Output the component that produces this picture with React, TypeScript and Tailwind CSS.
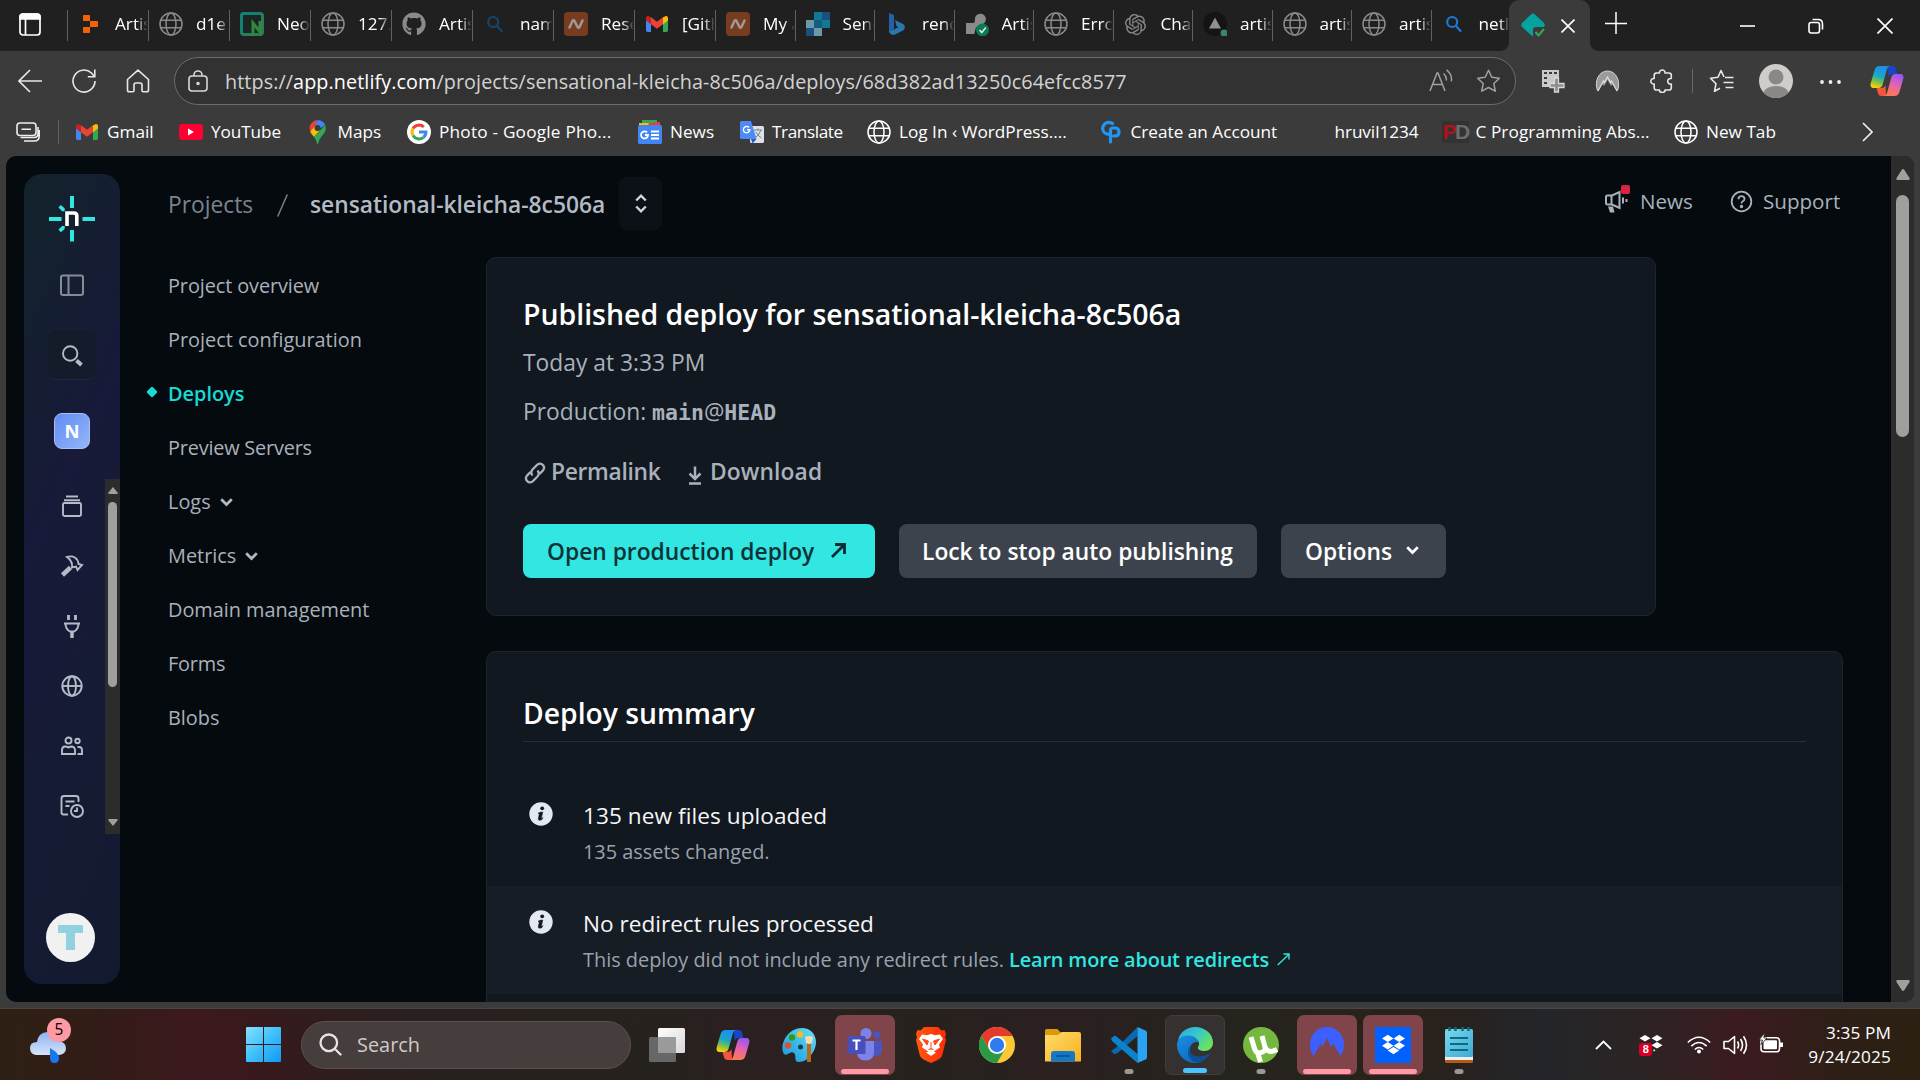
import React from 'react';
import { FaGithub, FaDropbox } from 'react-icons/fa';
import { SiOpenai } from 'react-icons/si';

/* ---------- shared icons ---------- */

const Globe = ({ color = '#8a8a8a', size = 24, stroke = 1.5 }: { color?: string; size?: number; stroke?: number }) => (
  <svg width={size} height={size} viewBox="0 0 24 24" fill="none" stroke={color} strokeWidth={stroke}>
    <circle cx="12" cy="12" r="11" />
    <ellipse cx="12" cy="12" rx="5" ry="11" />
    <path d="M2 8.300h20M2 15.700h20" />
  </svg>
);

const GmailIcon = () => (
  <svg width="24" height="24" viewBox="0 0 24 24">
    <path d="M1 6v12.300c0 1 .7 1.700 1.700 1.700H6V10z" fill="#4285f4" />
    <path d="M23 6v12.300c0 1-.7 1.700-1.700 1.700H18V10z" fill="#34a853" />
    <path d="M18 5.200 20 4.400c1.500-.8 3 .2 3 1.800V8.500l-5 3.700z" fill="#fbbc04" />
    <path d="M6 5.200 4 4.400C2.500 3.600 1 4.600 1 6.200v2.300l5 3.700z" fill="#c5221f" />
    <path d="M6 5.200 12 9.700l6-4.500v7l-6 4.500-6-4.500z" fill="#ea4335" />
  </svg>
);

const SearchTab = ({ color }: { color: string }) => (
  <svg width="24" height="24" viewBox="0 0 24 24" fill="none" stroke={color} strokeWidth="2.200" strokeLinecap="round">
    <circle cx="10.200" cy="10" r="5" />
    <path d="m14 14 4.500 5" />
  </svg>
);

const NamecheapIcon = () => (
  <svg width="24" height="24" viewBox="0 0 24 24">
    <rect width="24" height="24" rx="4" fill="#783c21" />
    <path d="M5.500 15.500 8.500 9c.5-1 1.500-1 2 0l3 6c.5 1 1.500 1 2 0l3-6.500" fill="none" stroke="#a09a96" strokeWidth="2.500" strokeLinecap="round" />
  </svg>
);

const Copilot = ({ id }: { id: string }) => (
  <svg width="34" height="30" viewBox="0 0 34 30">
    <defs>
      <linearGradient id={`${id}a`} x1="0.600" y1="0" x2="0.300" y2="1">
        <stop offset="0" stopColor="#1d8df0" />
        <stop offset="0.450" stopColor="#19a6c9" />
        <stop offset="0.700" stopColor="#6cbf5a" />
        <stop offset="1" stopColor="#ffd000" />
      </linearGradient>
      <linearGradient id={`${id}b`} x1="0.600" y1="0" x2="0.300" y2="1">
        <stop offset="0" stopColor="#9a55f5" />
        <stop offset="0.500" stopColor="#e865a8" />
        <stop offset="1" stopColor="#ff7a4a" />
      </linearGradient>
    </defs>
    <path d="M18 0h4.500c2 0 3 1 3.600 3l1.400 5h-5c-2 0-3 1-4 3z" fill="#1846c8" />
    <path d="M16 30h-4.500c-2 0-3-1-3.600-3L6.500 22h5c2 0 3-1 4-3z" fill="#f4553c" />
    <path d="M9.500 0H20c-1.600.3-2.500 1.500-3 3l-4.500 16c-.6 2-1.800 3-4 3H4C1 22 0 20 .8 17L4.600 4C5.400 1.300 7 0 9.500 0z" fill={`url(#${id}a)`} />
    <path d="M24.500 30H14c1.600-.3 2.500-1.500 3-3l4.500-16c.6-2 1.800-3 4-3H30c3 0 4 2 3.200 5l-3.800 13c-.8 2.700-2.400 4-4.900 4z" fill={`url(#${id}b)`} />
  </svg>
);

/* ---------- browser tabs ---------- */

const tabs: { title: string; wide: boolean; icon: React.ReactNode }[] = [
  {
    title: 'Artist', wide: true,
    icon: (
      <svg width="24" height="24" viewBox="0 0 24 24" fill="#f26207">
        <path d="M5 4c0-.8.5-1 1-1h5c.8 0 1 .4 1 1v5H5zM12 9h7c.8 0 1 .4 1 1v4c0 .8-.4 1-1 1h-7zM5 15h7v5c0 .8-.4 1-1 1H6c-.8 0-1-.4-1-1z" />
      </svg>
    ),
  },
  { title: 'd1e', wide: true, icon: <Globe /> },
  {
    title: 'Neo', wide: true,
    icon: (
      <svg width="24" height="24" viewBox="0 0 24 24">
        <rect x="1.500" y="1.500" width="21" height="21" rx="2.500" fill="#1b2623" stroke="#2b7d5c" strokeWidth="3" />
        <path d="M1.500 20V4q0-2.500 2.500-2.500H20" fill="none" stroke="#147f77" strokeWidth="3" />
        <path d="M13 24V11l7 9V9" fill="none" stroke="#2f8a3c" strokeWidth="3" />
      </svg>
    ),
  },
  { title: '127.0', wide: true, icon: <Globe /> },
  { title: 'Artist', wide: true, icon: <FaGithub size={24} color="#8a8a8a" /> },
  { title: 'nam', wide: true, icon: <SearchTab color="#17456f" /> },
  { title: 'Rese', wide: true, icon: <NamecheapIcon /> },
  { title: '[Gith', wide: true, icon: <GmailIcon /> },
  { title: 'My ac', wide: false, icon: <NamecheapIcon /> },
  {
    title: 'Send', wide: false,
    icon: (
      <svg width="24" height="24" viewBox="0 0 24 24">
        <path d="M8 0h8v8H8z" fill="#107a94" /><path d="M16 0h8v8h-8z" fill="#1b4f80" />
        <path d="M0 8h8v8H0z" fill="#6b9aa9" /><path d="M8 8h8v8H8z" fill="#165d80" /><path d="M16 8h8v8h-8z" fill="#107a94" />
        <path d="M0 16h8v8H0z" fill="#1b4f80" /><path d="M8 16h8v8H8z" fill="#6b9aa9" />
      </svg>
    ),
  },
  {
    title: 'rend', wide: false,
    icon: (
      <svg width="24" height="24" viewBox="0 0 24 24">
        <path d="M4 1 9 3v14l-5 3z" fill="#245fa8" />
        <path d="m10 8 8 4c3 2 2 5 0 6.500l-9 4.500c-3 0-5-2-5-4l5-1.500 4.500-2.500-2-1z" fill="#2878ab" />
      </svg>
    ),
  },
  {
    title: 'Artis', wide: false,
    icon: (
      <svg width="24" height="24" viewBox="0 0 24 24">
        <path d="M10 6a5.500 5.500 0 1 1 8 6c-4 0-2 3-6 3-2 0-2 7-3 7H1V11h7c2 0 2-2 2-5z" fill="#8a8a8a" />
        <circle cx="17.500" cy="18" r="6.500" fill="#087a55" />
        <path d="m14.500 18 2.300 2.500 4-5" fill="none" stroke="#d6e6de" strokeWidth="1.700" />
      </svg>
    ),
  },
  { title: 'Error', wide: false, icon: <Globe /> },
  { title: 'Chat', wide: false, icon: <SiOpenai size={21} color="#8a8a8a" /> },
  {
    title: 'artist', wide: false,
    icon: (
      <svg width="24" height="24" viewBox="0 0 24 24">
        <circle cx="12" cy="12" r="12" fill="#141414" />
        <path d="m12 5.500 6 11H6z" fill="#8f8f8f" />
        <circle cx="21" cy="21" r="3.500" fill="#3c8470" />
      </svg>
    ),
  },
  { title: 'artist', wide: false, icon: <Globe /> },
  { title: 'artist', wide: false, icon: <Globe /> },
  { title: 'netlif', wide: false, icon: <SearchTab color="#1a78d6" /> },
];

const TabStrip = () => (
  <div className="flex h-[51px] bg-[#202020] text-[17.200px] text-white">
    <div className="flex w-[67px] shrink-0 items-center pl-[19px] pb-[3px]">
      <svg width="22" height="23" viewBox="0 0 22 23" fill="none" stroke="#fff" strokeWidth="1.700">
        <rect x="1" y="1" width="20" height="21" rx="3" />
        <path d="M1 3.500Q1 1 4 1h14q3 0 3 2.500V6H1z" fill="#fff" />
        <path d="M6.500 6v16" />
      </svg>
    </div>
    {tabs.map((t, i) => (
      <div key={i} className={`${t.wide ? 'w-[81px]' : 'w-[79.500px]'} flex shrink-0 items-center pb-[3px]`}>
        <div className="mt-[3px] h-[31px] w-px bg-[#606060]" />
        <div className="ml-[10px] flex h-6 w-6 shrink-0 items-center justify-center">{t.icon}</div>
        <div className="ml-[13px] flex-1 overflow-hidden whitespace-nowrap [mask-image:linear-gradient(to_right,black_65%,transparent)]">{t.title}</div>
      </div>
    ))}
    <div className="-ml-[9px] flex">
      <div className="h-2 w-2 self-end bg-[radial-gradient(circle_at_0_0,#202020_7.500px,#3b3b3b_8px)]" />
      <div className="flex w-[81px] items-center rounded-t-[10px] bg-[#3b3b3b] pb-[2px] pl-[12px]">
        <svg width="24" height="24" viewBox="0 0 24 24">
          <path d="M10 1.500q2-2 4 0L23 10q1.500 2 0 4h-8c-2 0-3 1-3 3v6q-1 0-2-1L1 14q-1.500-2 0-4z" fill="#05a3a0" />
          <path d="m14.500 19 3 3.500 5.500-6.500" fill="none" stroke="#36a852" strokeWidth="2" />
        </svg>
        <svg className="ml-[16px] mt-[3px]" width="14" height="14" viewBox="0 0 14 14" stroke="#fff" strokeWidth="1.600"><path d="m.5.5 13 13m0-13-13 13" /></svg>
      </div>
      <div className="h-2 w-2 self-end bg-[radial-gradient(circle_at_100%_0,#202020_7.500px,#3b3b3b_8px)]" />
    </div>
    <svg className="ml-[7px] mt-[12px]" width="22" height="22" viewBox="0 0 22 22" stroke="#fff" strokeWidth="1.500"><path d="M0 11.500h22M11 0v22" /></svg>
    <div className="ml-auto mr-[27px] flex items-center gap-[53px]">
      <svg width="15" height="15" viewBox="0 0 15 15" stroke="#fff" strokeWidth="1.600"><path d="M0 8h15" /></svg>
      <svg width="16" height="16" viewBox="0 0 16 16" fill="none" stroke="#fff" strokeWidth="1.600">
        <rect x="1" y="4.500" width="10.500" height="10.500" rx="2.200" />
        <path d="M4.500 1.500H10q4.500 0 4.500 4.500v5.500" />
      </svg>
      <svg width="16" height="16" viewBox="0 0 16 16" stroke="#fff" strokeWidth="1.700"><path d="m.5.5 15 15m0-15-15 15" /></svg>
    </div>
  </div>
);

/* ---------- toolbar ---------- */

const Toolbar = () => (
  <div className="flex h-[60px] items-center bg-[#3b3b3b] pl-[18px]">
    <svg width="24" height="24" viewBox="0 0 24 24" fill="none" stroke="#e8e8e8" strokeWidth="1.600"><path d="M24 12H1M12 1 1 12l11 11" /></svg>
    <svg className="ml-[30px]" width="24" height="24" viewBox="0 0 24 24" fill="none" stroke="#e8e8e8" strokeWidth="1.600"><path d="M23 12A11 11 0 1 1 19.500 4L22.500 7.500M22.800.5v7.300h-7" /></svg>
    <svg className="ml-[30px]" width="24" height="24" viewBox="0 0 24 24" fill="none" stroke="#e8e8e8" strokeWidth="1.600" strokeLinejoin="round">
      <path d="M1.500 10.500 12 1.200l10.500 9.300V21q0 1.800-1.800 1.800h-3.400q-1.300 0-1.300-1.300V16q0-2-2-2h-4q-2 0-2 2v5.500q0 1.300-1.300 1.300H3.300q-1.800 0-1.800-1.800z" />
    </svg>
    <div className="ml-6 flex h-12 w-[1342px] items-center rounded-full border border-[#6c6c6c] bg-[#323232]">
      <svg className="-mt-px ml-[13px]" width="20" height="22" viewBox="0 0 20 22" fill="none" stroke="#d8d8d8" strokeWidth="1.600">
        <rect x="1" y="6" width="18" height="15" rx="3" />
        <path d="M6 6V5a4 4 0 0 1 8 0v1" />
        <circle cx="10" cy="13.500" r="1" fill="#d8d8d8" />
      </svg>
      <div className="ml-[17px] pt-px text-[19.800px] tracking-[0.080px] whitespace-nowrap text-[#d2d2d2]">
        https://<span className="text-white">app.netlify.com</span>/projects/sensational-kleicha-8c506a/deploys/68d382ad13250c64efcc8577
      </div>
      <div className="mr-[14px] ml-auto flex items-center gap-[23px]">
        <svg width="24" height="24" viewBox="0 0 24 24" fill="none" stroke="#a0a0a0" strokeWidth="1.500">
          <path d="m1 22 7-18h1l7 18M3.500 15.500h10M14.500 4.500q3.500 3 2.800 7M17.500.8q6 4.700 4.800 11.500" />
        </svg>
        <svg width="25" height="24" viewBox="0 0 24 24" fill="none" stroke="#a0a0a0" strokeWidth="1.500" strokeLinejoin="round">
          <path d="m12 1.200 3.300 7 7.600 1-5.600 5.300 1.500 7.700L12 18.500l-6.800 3.700 1.500-7.700L1.100 9.200l7.600-1z" />
        </svg>
      </div>
    </div>
    <svg className="ml-[25px]" width="24" height="24" viewBox="0 0 24 24">
      <path d="M1 1h17v17H1z" fill="#c9c9c9" />
      <path d="M3 3h3v2H3zM8 3h3v2H8zM13 3h3v2h-3zM3 8h3v2H3zM3 13h3v2H3z" fill="#3b3b3b" />
      <path d="M13.500 9h4v5.500H23v4h-5.500V23h-4v-4.500H9v-4h4.500z" fill="#8d8d8d" stroke="#d8d8d8" strokeWidth="1.300" />
    </svg>
    <svg className="ml-[30px]" width="25" height="24" viewBox="0 0 25 24">
      <path d="M2.500 22.500C-1 12 4 2 12.500 2S26 12 22.500 22.500L18 15l-2 2-3.500-6L9 17l-2-2z" fill="#9a9a9a" />
      <path d="M3 22 8.500 12l1 1.500L12.500 8l3 5.500 1-1.500L22 22" fill="none" stroke="#e0e0e0" strokeWidth="1.200" />
      <path d="M2.500 21.500C-1 12 4 2 12.500 2S26 12 22.500 21.500" fill="none" stroke="#d5d5d5" />
    </svg>
    <svg className="ml-[30px]" width="24" height="24" viewBox="0 0 24 24" fill="none" stroke="#e8e8e8" strokeWidth="1.600" strokeLinejoin="round">
      <path d="M5.500 4H9.500C9 0 15.500 0 15 4H19q2.300 0 2.300 2.300V9.500C16.500 9 16.500 15.500 21.300 15v3.700q0 2.300-2.300 2.300H15c.5 3.500-6 3.500-5.500 0H6.500q-2.300 0-2.300-2.300V15C-.3 15.500-.3 9 4.200 9.500V6.300Q4.200 4 6.500 4" />
    </svg>
    <div className="ml-[18px] h-6 w-px bg-[#6a6a6a]" />
    <svg className="ml-[16px]" width="25" height="24" viewBox="0 0 25 24" fill="none" stroke="#e8e8e8" strokeWidth="1.600" strokeLinejoin="round">
      <path d="m15 8-3-6.500L9 8.300l-7.500 1L7 14.700 5.500 22.300l5.500-3M16 8.500h8.500M14.500 13.500h10M16.500 18.500h8" />
    </svg>
    <svg className="ml-[25px]" width="34" height="34" viewBox="0 0 34 34">
      <circle cx="17" cy="17" r="17" fill="#cfcdca" />
      <circle cx="17" cy="13" r="7.500" fill="#8a8785" />
      <path d="M4.500 28.500Q7 22 17 22t12.500 6.500A17 17 0 0 1 4.500 28.500z" fill="#8a8785" />
    </svg>
    <svg className="ml-[27px] mt-[2px]" width="22" height="4" viewBox="0 0 22 4" fill="#f0f0f0"><circle cx="2" cy="2" r="1.900" /><circle cx="10.500" cy="2" r="1.900" /><circle cx="19" cy="2" r="1.900" /></svg>
    <div className="ml-[28px]"><Copilot id="tb" /></div>
  </div>
);

/* ---------- bookmarks ---------- */

const bookmarks: { label: string; cls: string; icon: React.ReactNode }[] = [
  { label: 'Gmail', cls: 'w-[104px]', icon: <GmailIcon /> },
  {
    label: 'YouTube', cls: 'w-[126.500px] tracking-[-0.100px]',
    icon: (
      <svg width="24" height="16" viewBox="0 0 24 16"><rect width="24" height="16" rx="3" fill="#ff0033" /><path d="m9 4.500 6 3.500-6 3.500z" fill="#fff" /></svg>
    ),
  },
  {
    label: 'Maps', cls: 'w-[101.500px]',
    icon: (
      <svg width="17" height="24" viewBox="0 0 17 24">
        <path d="M8.500 0A8 8 0 0 0 2.400 2.900L6 7z" fill="#ea4335" />
        <path d="M2.400 2.900C.5 5 0 8 1.200 11.500L6.200 6z" fill="#ea4335" />
        <path d="M8.500 0C12 0 15 2 16.200 5L11 8.500 5.800 5 9 0z" fill="#4285f4" />
        <path d="M1.200 11.500C2 13.500 3.500 15 5 17L11 10 6 6z" fill="#fbbc04" />
        <path d="M16.200 5c1.500 4 .2 7-3 10.500-2 2.500-3.500 5-4 8-.2.700-1 .7-1.200 0C7.500 21 6.500 19 5 17z" fill="#34a853" />
        <circle cx="8.500" cy="8" r="3" fill="#3b3b3b" />
      </svg>
    ),
  },
  {
    label: 'Photo - Google Pho...', cls: 'w-[231px] tracking-[0.220px]',
    icon: (
      <svg width="24" height="24" viewBox="0 0 24 24">
        <circle cx="12" cy="12" r="12" fill="#fff" />
        <g fill="none" strokeWidth="3">
          <path d="M16.800 7A7 7 0 0 0 6 8.500" stroke="#ea4335" />
          <path d="M6 8.500a7 7 0 0 0 0 7" stroke="#fbbc04" />
          <path d="M6 15.500A7 7 0 0 0 16.500 17.300" stroke="#34a853" />
          <path d="M16.500 17.300C18.500 15.800 19 14 18.900 12H12" stroke="#4285f4" />
        </g>
      </svg>
    ),
  },
  {
    label: 'News', cls: 'w-[102px]',
    icon: (
      <svg width="24" height="24" viewBox="0 0 24 24">
        <path d="M4 0h15v6H4z" fill="#34a853" /><path d="M1 3h10v5H1z" fill="#fbbc04" /><path d="m11 3 11-1v6H9z" fill="#ea4335" />
        <rect y="5" width="24" height="19" rx="1.500" fill="#4285f4" />
        <path d="M9 12.500a3.500 3.500 0 1 0 1 2.500H7M13 11.500h8M13 15h8M13 18.500h8" fill="none" stroke="#fff" strokeWidth="1.800" />
      </svg>
    ),
  },
  {
    label: 'Translate', cls: 'w-[127px] tracking-[-0.400px]',
    icon: (
      <svg width="24" height="24" viewBox="0 0 24 24">
        <rect x="10" y="6" width="14" height="17" rx="1.500" fill="#dfe1e5" />
        <path d="M14 10h8M18 8.500V10M21 10q-2 6-6.500 8M16 12q2 4 5.500 6" fill="none" stroke="#6f8391" />
        <path d="M1.500 1H11l5.500 18H1.500Q0 19 0 17.500v-15Q0 1 1.500 1z" fill="#4c8bf5" />
        <path d="m11 19 5.500 0-4 4.500z" fill="#2a56c6" />
        <path d="M9 7.500a3.200 3.200 0 1 0 .8 2.300H7" fill="none" stroke="#fff" strokeWidth="1.400" />
      </svg>
    ),
  },
  { label: 'Log In ‹ WordPress....', cls: 'w-[231.500px]', icon: <Globe color="#fff" /> },
  {
    label: 'Create an Account', cls: 'w-[204px]',
    icon: (
      <svg width="24" height="24" viewBox="0 0 24 24" fill="none" stroke="#2196f3" strokeWidth="3.200" strokeLinecap="round">
        <path d="M13.500 3.500C7 .5 3 5 3.800 9.500c.5 3 3.200 5 6.200 4.500M11.500 22V10.500q0-2.500 2.500-2.500h2q4 0 4 4t-4 4h-1.500" />
      </svg>
    ),
  },
  { label: 'hruvil1234', cls: 'w-[141px] tracking-[-0.080px]', icon: null },
  {
    label: 'C Programming Abs...', cls: 'w-[230.500px] tracking-[0.080px]',
    icon: (
      <div className="flex bg-[#333] font-['Liberation_Sans'] text-[21px] leading-[22px] font-bold tracking-[-1.500px]">
        <span className="text-[#b01217]">P</span>
        <span className="text-[#6d6d6d]">D</span>
      </div>
    ),
  },
  { label: 'New Tab', cls: 'w-[130px]', icon: <Globe color="#fff" /> },
];

const Bookmarks = () => (
  <div className="flex h-[45px] items-center bg-[#3b3b3b] pb-[3px] pl-[16px] text-[17.200px] text-white">
    <svg width="24" height="20" viewBox="0 0 24 20" fill="none" stroke="#eee" strokeWidth="1.600">
      <rect x="1" y="1" width="19" height="12.500" rx="3" />
      <path d="M5.500 7.200h9.500M22 5v6.500q0 4-4 4H4.500M23.200 8v6q0 5-5 5H8" />
    </svg>
    <div className="mr-[16px] ml-[18px] h-6 w-px bg-[#626262]" />
    {bookmarks.map((b) => (
      <div key={b.label} className={`flex shrink-0 items-center whitespace-nowrap ${b.cls}`}>
        <div className="mr-[8px] flex h-6 w-6 shrink-0 items-center justify-center">{b.icon}</div>
        {b.label}
      </div>
    ))}
    <svg className="mr-[47px] ml-auto" width="11" height="20" viewBox="0 0 11 20" fill="none" stroke="#eee" strokeWidth="1.700"><path d="m1 1 9 9-9 9" /></svg>
  </div>
);

/* ---------- netlify sidebar ---------- */

const SideIcon = ({ children }: { children: React.ReactNode }) => (
  <svg width="24" height="24" viewBox="0 0 24 24" fill="none" stroke="#b4bcc8" strokeWidth="1.900">{children}</svg>
);

const Sidebar = () => (
  <div className="m-[18px] flex h-[810px] w-24 shrink-0 flex-col items-center overflow-hidden rounded-[18px] bg-[linear-gradient(115deg,#12232a_0%,#14202f_12%,#171a38_38%,#161b35_65%,#131a2f_100%)] pt-[21px]">
    <svg width="48" height="48" viewBox="0 0 48 48" className="shrink-0">
      <g fill="#32e6e2">
        <path d="M22 1h4v12h-4zM22 35h4v11.500h-4zM1 22h12.500v4H1zM34.500 22H47v4H34.500z" />
        <path d="m10.500 12.500 2.200-2.500 4 3.200v3h-2.500zM10.500 34.500l2.200 2.700 4-3.200v-3h-2.500z" />
      </g>
      <path d="M19 31V18h7q2.800 0 2.800 2.800V31" fill="none" stroke="#fff" strokeWidth="3.600" />
    </svg>
    <div className="mt-[30px] h-6">
      <svg width="24" height="24" viewBox="0 0 24 24" fill="none" stroke="#848c98" strokeWidth="2"><rect x="1" y="2.500" width="22" height="19.500" rx="2" /><path d="M8.500 2.500V22" /></svg>
    </div>
    <div className="mt-[33px] flex h-[50px] w-12 shrink-0 items-center justify-center rounded-[9px] border border-t-[#151b29] border-r-[#161d2b] border-b-[#1f2838] border-l-[#161d2b] bg-[#141b2a]">
      <SideIcon><circle cx="10.200" cy="10.500" r="7.200" /><path d="m16.500 17.500 5 4.500" strokeWidth="4" /></SideIcon>
    </div>
    <div className="mt-[33px] flex h-9 w-9 shrink-0 items-center justify-center rounded-[8px] border border-[#a9c0f4] bg-linear-to-br from-[#618bf5] to-[#93b6f5] text-[18.500px] font-bold text-white">N</div>
    <div className="mt-[30px] flex h-[355px] w-full shrink-0">
      <div className="flex w-[81px] flex-col gap-9 pt-[15px] pl-9">
        <SideIcon><rect x="3" y="9" width="18" height="13" rx="1.500" /><path d="M4 6.200h16M6 2.500h12" /></SideIcon>
        <SideIcon><path d="m2.500 21 8-7.500" strokeWidth="4.500" /><path d="M7 3c6-2 11 1 11.500 7l3.500 1-4.500 5-1.500-3.500-4 1q1-6-5-10.500z" /></SideIcon>
        <SideIcon><path d="M8.500 1v5M15.500 1v5" strokeWidth="2.800" /><path d="M4 9.500h16M5.500 9.500q0 5.500 4.500 8h4q4.500-2.500 4.500-8" /><path d="M12 17v7" strokeWidth="3.500" /></SideIcon>
        <SideIcon><circle cx="12" cy="12" r="9.700" /><ellipse cx="12" cy="12" rx="4" ry="9.700" /><path d="M2.500 12h19" /></SideIcon>
        <SideIcon><circle cx="8.500" cy="6.500" r="3" /><circle cx="17.500" cy="7" r="2.200" /><path d="M2 20v-4q0-3.500 3-3.500h1l2.500 1 2.500-1q4 0 4 3.500v4zM17.500 13H19q3 0 3 3v4h-4.500" /></SideIcon>
        <SideIcon><path d="M8 20.500H3.500Q1.500 20.500 1.500 18.500v-14q0-2.500 2.500-2.500h12q2.500 0 2.500 2.500V8M5.500 7.500h9M5.500 12h4" /><circle cx="17" cy="17" r="6" /><path d="M17 13.500V17h-3" /></SideIcon>
      </div>
      <div className="flex w-[15px] flex-col items-center bg-[#2c2c2c] pt-2">
        <svg width="10" height="7" viewBox="0 0 10 7" fill="#a0a0a0"><path d="M5 0 9.500 5.500Q10 7 9 7H1Q0 7 .5 5.500z" /></svg>
        <div className="mt-2 h-[185px] w-[9px] rounded-full bg-[#9f9f9f]" />
        <svg className="mt-auto mb-2" width="10" height="7" viewBox="0 0 10 7" fill="#a0a0a0"><path d="M5 7 9.500 1.500Q10 0 9 0H1Q0 0 .5 1.500z" /></svg>
      </div>
    </div>
    <div className="mt-[79px] mr-[3px] flex h-[49px] w-[49px] shrink-0 items-center justify-center rounded-full bg-[#f1f1f1]">
      <svg width="25" height="25" viewBox="0 0 25 25" fill="#90d3df"><path d="M0 0h25v8h-8v17H8V8H0z" /></svg>
    </div>
  </div>
);

/* ---------- main content ---------- */

const Chevron = ({ color }: { color: string }) => (
  <svg width="13" height="9" viewBox="0 0 13 9" fill="none" stroke={color} strokeWidth="2.700"><path d="m1.200 1.300 5.300 5.200 5.300-5.200" /></svg>
);

const navItems = [
  { label: 'Project overview', cls: 'tracking-[-0.100px]' },
  { label: 'Project configuration', cls: '' },
  { label: 'Deploys', cls: '', active: true },
  { label: 'Preview Servers', cls: 'tracking-[-0.200px]' },
  { label: 'Logs', cls: '', menu: true },
  { label: 'Metrics', cls: '', menu: true },
  { label: 'Domain management', cls: 'tracking-[-0.030px]' },
  { label: 'Forms', cls: 'tracking-[-0.200px]' },
  { label: 'Blobs', cls: '' },
];

const InfoIcon = () => (
  <svg width="24" height="24" viewBox="0 0 24 24">
    <circle cx="12" cy="12" r="11.700" fill="#e4e8f0" />
    <circle cx="13.200" cy="6.300" r="1.900" fill="#11181f" />
    <path d="M9 11.300q1-1 3.500-1.200h1.300l-1.500 6.400q.8 0 1.800-1-.8 2.800-3.500 2.800-1.800 0-1.300-2l1-4.200z" fill="#11181f" stroke="#11181f" strokeWidth=".5" />
  </svg>
);

const Main = () => (
  <div className="flex min-w-0 flex-1 flex-col">
    <div className="flex h-[101px] shrink-0 items-start pt-[21px]">
      <div className="flex h-[53px] items-center pl-[30px] text-[22.800px]">
        <span className="w-[109px] pt-[3px] text-[#7b838e]">Projects</span>
        <svg width="11" height="23" viewBox="0 0 11 23" stroke="#7b838e" strokeWidth="1.500" className="mt-[3px]"><path d="M.7 22.500 10.300.5" /></svg>
        <span className="ml-[22px] w-[309px] pt-[3px] font-semibold tracking-[-0.020px] text-[#b3bac4]">sensational-kleicha-8c506a</span>
        <div className="flex h-[53px] w-[43px] items-center justify-center rounded-[8px] bg-[#0b1116]">
          <svg width="12" height="19" viewBox="0 0 12 19" fill="none" stroke="#d0d6de" strokeWidth="2.400"><path d="m1.200 6.500 4.800-4.800 4.800 4.800M1.200 12.500 6 17.300l4.800-4.800" /></svg>
        </div>
      </div>
      <div className="mr-[48px] ml-auto flex h-[49px] items-center text-[20.600px] font-medium text-[#a9b1bc]">
        <div className="relative h-6 w-6">
          <svg width="24" height="24" viewBox="0 0 24 24" fill="none" stroke="#a9b1bc" strokeWidth="2">
            <path d="M7.500 5.500v9M2 7Q2 5.500 3.500 5.500h4.500l7.500-3.500v16l-7.500-3.500H3.500Q2 14.500 2 13z" />
            <path d="M4 16.500h5l1.500 6H6z" fill="#a9b1bc" stroke="none" /><path d="M19 7.500v6M22.500 9v3" />
          </svg>
          <div className="absolute -top-[5px] left-[17px] h-[9px] w-[9px] rounded-[2px] bg-[#dc2440]" />
        </div>
        <span className="ml-[12px] w-[90px]">News</span>
        <svg width="23" height="23" viewBox="0 0 23 23" fill="none" stroke="#a9b1bc" strokeWidth="1.800">
          <circle cx="11.500" cy="11.500" r="9.800" />
          <path d="M8.500 9.200q0-3 3-3t3 2.700q0 1.500-1.700 2.300-1.300.7-1.300 2.300" /><circle cx="11.500" cy="16.500" r=".8" fill="#a9b1bc" />
        </svg>
        <span className="ml-[10px] w-[80px]">Support</span>
      </div>
    </div>

    <div className="flex">
      <nav className="w-[348px] shrink-0 pt-[2px] pl-[30px] text-[19.900px] text-[#a9b1bc]">
        {navItems.map((n) => (
          <div key={n.label} className={`relative flex h-[54px] items-center ${n.cls} ${n.active ? 'font-semibold text-[#16dbd6]' : ''}`}>
            {n.active && <div className="absolute top-[21px] -left-[20px] h-2 w-2 rotate-45 rounded-[1px] bg-[#16dbd6]" />}
            {n.label}
            {n.menu && <span className="ml-[9px]"><Chevron color="#b3bac4" /></span>}
          </div>
        ))}
      </nav>

      <div className="flex-1">
        <section className="h-[359px] w-[1170px] rounded-[10px] border border-[#1e252d] bg-[#11181f] pt-[36px] pl-[36px] text-[22.800px] text-[#a9b1bc]">
          <h1 className="h-10 text-[28.500px] leading-10 font-semibold tracking-[-0.030px] text-white">Published deploy for sensational-kleicha-8c506a</h1>
          <p className="mt-[13px] h-8 leading-8">Today at 3:33 PM</p>
          <p className="mt-[17px] h-8 leading-8 whitespace-pre">Production: <span className="font-['DejaVu_Sans_Mono'] text-[21.500px] font-bold">main</span>@<span className="font-['DejaVu_Sans_Mono'] text-[21.500px] font-bold">HEAD</span></p>
          <div className="mt-[28px] flex h-8 items-center font-semibold">
            <svg className="mt-px ml-px" width="22" height="22" viewBox="0 0 22 22" fill="none" stroke="#a9b1bc" strokeWidth="2.300">
              <path d="M8.500 13.500Q6 10.500 8.500 7.500L13.300 2.700q3-2.300 5.500.2t.2 5.500L15.500 12M13.500 8.500q2.500 3 0 6L8.700 19.300q-3 2.300-5.500-.2t-.2-5.500L6.500 10" />
            </svg>
            <span className="ml-[5px] w-[137px] tracking-[-0.300px]">Permalink</span>
            <svg className="mt-[6px]" width="14" height="19" viewBox="0 0 14 19" fill="none" stroke="#a9b1bc" strokeWidth="2.500"><path d="M7 .5v12M1.500 7.500 7 13l5.500-5.500M1 17.500h12" /></svg>
            <span className="ml-[8px] tracking-[0.100px]">Download</span>
          </div>
          <div className="mt-[36px] flex h-[54px] gap-6 font-semibold">
            <div className="flex w-[352px] items-center rounded-[8px] bg-[#32e6e2] pt-[2px] pl-[24px] text-[#0c3238]">
              <span className="w-[284px] pt-px">Open production deploy</span>
              <svg className="-mt-1" width="15" height="15" viewBox="0 0 15 15" fill="none" stroke="#0c2b30" strokeWidth="2.800"><path d="M1 14 13 2M4 1.500h9.500V11" /></svg>
            </div>
            <div className="flex w-[358px] items-center rounded-[8px] bg-[#3d434c] pt-[3px] pl-[23px] text-white">Lock to stop auto publishing</div>
            <div className="flex w-[165px] items-center rounded-[8px] bg-[#3d434c] pt-[3px] pl-[24px] text-white">
              <span className="w-[101px]">Options</span>
              <span className="-mt-1"><Chevron color="#fff" /></span>
            </div>
          </div>
        </section>

        <section className="mt-[35px] h-[400px] w-[1357px] rounded-t-[10px] border border-[#1e252d] bg-[#11181f] pt-[41px]">
          <h2 className="mx-[36px] h-[49px] border-b border-[#272e37] text-[28.300px] leading-10 font-semibold text-white">Deploy summary</h2>
          <div className="mt-[36px] flex h-[108px] pt-[21px] pl-[42px]">
            <div className="mt-[3px]"><InfoIcon /></div>
            <div className="ml-[30px]">
              <div className="h-8 text-[22.600px] leading-[33px] font-medium tracking-[0.060px] text-[#f5f6f8]">135 new files uploaded</div>
              <div className="mt-[6px] h-7 text-[19.900px] leading-[29px] text-[#9aa2ad]">135 assets changed.</div>
            </div>
          </div>
          <div className="flex h-[108px] bg-[#161d24] pt-[21px] pl-[42px]">
            <div className="mt-[3px]"><InfoIcon /></div>
            <div className="ml-[30px]">
              <div className="h-8 text-[22.600px] leading-[33px] font-medium text-[#f5f6f8]">No redirect rules processed</div>
              <div className="mt-[6px] flex h-7 items-center text-[19.900px] leading-[29px] whitespace-nowrap text-[#9aa2ad]">
                <span className="w-[426px]">This deploy did not include any redirect rules.</span>
                <span className="w-[268px] font-semibold tracking-[-0.140px] text-[#32e6e2]">Learn more about redirects</span>
                <svg width="13" height="13" viewBox="0 0 13 13" fill="none" stroke="#32e6e2" strokeWidth="1.400"><path d="M.7 12 12 1.300M6.500 1H12v5.500" /></svg>
              </div>
            </div>
          </div>
        </section>
      </div>
    </div>
  </div>
);

const PageScrollbar = () => (
  <div className="flex w-[23px] shrink-0 flex-col items-center bg-[#2c2c2c] pt-[13px]">
    <svg width="14" height="11" viewBox="0 0 14 11" fill="#a0a0a0"><path d="M7 0q.8 0 1.200.8L13.500 9q.6 2-1 2h-11q-1.600 0-1-2L5.800.8Q6.200 0 7 0z" /></svg>
    <div className="mt-[15px] h-[242px] w-[13px] rounded-full bg-[#9f9f9f]" />
    <svg className="mt-auto mb-[11px]" width="14" height="11" viewBox="0 0 14 11" fill="#a0a0a0"><path d="M7 11q.8 0 1.200-.8L13.500 2q.6-2-1-2h-11Q-.1 0 .5 2l5.300 8.200q.4.800 1.200.8z" /></svg>
  </div>
);

/* ---------- windows taskbar ---------- */

const apps: { name: string; tile?: string; bar?: string; icon: React.ReactNode }[] = [
  {
    name: 'views',
    icon: (
      <svg width="36" height="36" viewBox="0 0 36 36">
        <defs><linearGradient id="tv" x1="0" y1="0" x2="1" y2="1"><stop stopColor="#fff" /><stop offset="1" stopColor="#d8d8d8" /></linearGradient></defs>
        <rect x="9" y="1" width="27" height="25" rx="1.500" fill="url(#tv)" />
        <rect y="10" width="27" height="25" rx="1.500" fill="#6f6f6f" opacity=".9" />
        <rect x="9" y="10" width="18" height="16" fill="#a2a2a2" opacity=".8" />
      </svg>
    ),
  },
  { name: 'copilot', icon: <Copilot id="ta" /> },
  {
    name: 'paint',
    icon: (
      <svg width="36" height="36" viewBox="0 0 36 36">
        <defs><linearGradient id="pt" x1="1" y1="0" x2="0" y2="1"><stop stopColor="#62e0f8" /><stop offset="1" stopColor="#1894dc" /></linearGradient></defs>
        <path d="M21 1c8 0 14 6 14 14 0 9-8 20-17 20-6 0-2-7-5-9-4-3-7 4-10 1C-2 20 5 1 21 1z" fill="url(#pt)" />
        <circle cx="11" cy="10.500" r="3.200" fill="#2f9b19" /><circle cx="19" cy="7.500" r="3.200" fill="#f9bc12" /><circle cx="7" cy="18.500" r="3.200" fill="#d8542c" /><circle cx="19.500" cy="20" r="2.500" fill="#123a55" />
        <path d="M26 16h4v19h-4z" fill="#b86a12" /><path d="M24 10q4-2 8 0l-1 6q-3 2-6 0z" fill="#f3dcb0" />
      </svg>
    ),
  },
  {
    name: 'teams', tile: 'bg-[#7f454b]', bar: 'w-12 bg-[#ff99a4]',
    icon: (
      <svg width="36" height="36" viewBox="0 0 36 36">
        <circle cx="30" cy="8" r="3.700" fill="#4a55c0" /><circle cx="19" cy="6.500" r="5.500" fill="#7b83eb" />
        <path d="M24 14h11v9q0 6-6 6h-5z" fill="#4a55c0" />
        <path d="M10 14h17v11q0 8.500-8.500 8.500T10 25z" fill="#7b83eb" />
        <rect x="0.500" y="9" width="18" height="18" rx="1.500" fill="#474fba" />
        <path d="M5.500 13.500h8M9.500 13.500V23" stroke="#fff" strokeWidth="2.200" />
      </svg>
    ),
  },
  {
    name: 'brave',
    icon: (
      <svg width="36" height="36" viewBox="0 0 36 36">
        <defs><linearGradient id="br"><stop stopColor="#ff5a10" /><stop offset="1" stopColor="#ff2a08" /></linearGradient></defs>
        <path d="M11 0h14l3.500 3.500 3-.5 1.500 4-1 3 1 3-4 16q-1 3-11 7Q8 32 7 29L3 13l1-3-1-3 1.500-4 3 .5z" fill="url(#br)" />
        <path d="m9 7.500 5 .8 4-1.300 4 1.300 5-.8 3 4.500-4 5.500 1 3-4 2.500-5 3.500-5-3.500-4-2.500 1-3L6 12z" fill="#fff" />
        <path d="m9.500 12 6 2-1.500 4zM26.500 12l-6 2 1.500 4zM15.500 22.500l2.500-1 2.500 1M18 15v6" fill="#ff4710" stroke="#ff4710" strokeWidth="1" />
        <path d="m13 25.500 5-2 5 2-5 3.500z" fill="#fff" />
      </svg>
    ),
  },
  {
    name: 'chrome',
    icon: (
      <svg width="36" height="36" viewBox="0 0 36 36">
        <circle cx="18" cy="18" r="18" fill="#fcc934" />
        <path d="M2.400 9A18 18 0 0 1 33.600 9H18L10.200 22.500z" fill="#e33b2e" />
        <path d="M2.400 9A18 18 0 0 0 18 36l7.800-13.500H10.200z" fill="#2a9a48" />
        <circle cx="18" cy="18" r="9" fill="#fff" /><circle cx="18" cy="18" r="7.200" fill="#2f7bf0" />
      </svg>
    ),
  },
  {
    name: 'explorer',
    icon: (
      <svg width="36" height="36" viewBox="0 0 36 36">
        <defs><linearGradient id="ex" x1="0" y1="0" x2="1" y2="1"><stop stopColor="#ffdb6b" /><stop offset="1" stopColor="#f7b21c" /></linearGradient></defs>
        <path d="M0 3.500Q0 2 1.500 2h11l4 4.500-4 4H0z" fill="#d99a0b" />
        <path d="M0 8h13l3.500-3H34q2 0 2 2v27.500H0z" fill="url(#ex)" />
        <path d="M6 34.500V27q0-3 3-3h18q3 0 3 3v7.500z" fill="#1478c8" /><path d="M11 29h14" stroke="#0a4f91" strokeWidth="1.500" />
      </svg>
    ),
  },
  {
    name: 'code', bar: 'w-[9px] bg-[#9a9795]',
    icon: (
      <svg width="36" height="36" viewBox="0 0 36 36">
        <path d="M26.500 0 9 17.500 3 22 0 24l3 3 3-.5L26.500 9z" fill="#0a6ab0" />
        <path d="M3 9 0 11.500 1 14l25.500 22V27L5.500 9.500Q4 8.500 3 9z" fill="#0b82cc" />
        <path d="m26.500 0 8 3.500q1.500.7 1.500 2.500v24q0 1.800-1.500 2.500l-8 3.500z" fill="#29a3f2" />
      </svg>
    ),
  },
  {
    name: 'edge', tile: 'bg-[#343130] border border-[#413e3c]', bar: 'w-6 bg-[#4cc2ff]',
    icon: (
      <svg width="36" height="36" viewBox="0 0 36 36">
        <defs>
          <linearGradient id="eg" x1="0" y1="0" x2="1" y2=".6"><stop stopColor="#2aa7e0" /><stop offset=".5" stopColor="#35c7cf" /><stop offset="1" stopColor="#6be45a" /></linearGradient>
          <linearGradient id="eh" x1="0" y1="0" x2=".6" y2="1"><stop stopColor="#1c8ee0" /><stop offset="1" stopColor="#0a6cc4" /></linearGradient>
        </defs>
        <path d="M1 13C3 5 10 0 18 0c10 0 18 7 18 15.500C36 21 32 24 27.500 24S20 22 21 20s1.500-3 .5-6L10 9z" fill="url(#eg)" />
        <path d="M0 18C0 12 5 8.500 11 8.500c6 0 10 3 11 7.500-2-2-9-1-9 7 0 7 6 11 13 11-2 1.300-5 2-8 2C8 36 0 28 0 18z" fill="url(#eh)" />
        <path d="M14 17c-3 3-2 9 3 11.500 5 2 11 1 16.500-2.500-2.500 5-8 9-13 9.500C12 35 8 24 14 17z" fill="#0f4f97" />
      </svg>
    ),
  },
  {
    name: 'torrent', bar: 'w-[9px] bg-[#9a9795]',
    icon: (
      <svg width="36" height="36" viewBox="0 0 36 36">
        <circle cx="18" cy="18" r="18" fill="#76b83f" />
        <path d="m8 10 4 13q2 4 6.500 2.500T22 20l-3-11M22 20q2.500 5 6 4.500t6-2M14 24l3.500 11" fill="none" stroke="#fff" strokeWidth="5" />
      </svg>
    ),
  },
  {
    name: 'vpn', tile: 'bg-[#7f454b]', bar: 'w-12 bg-[#ff99a4]',
    icon: (
      <svg width="36" height="36" viewBox="0 0 36 36">
        <path d="M4.500 29C-4 16 4 0 18 0s22 16 13.500 29L24 16.500l-2 3.500-4-9-4.500 9-1.500-3.500z" fill="#3e5fff" />
      </svg>
    ),
  },
  {
    name: 'dropbox', tile: 'bg-[#7f454b]', bar: 'w-12 bg-[#ff99a4]',
    icon: <div className="flex h-9 w-9 items-center justify-center bg-[#0061fe]"><FaDropbox size={23} color="#fff" /></div>,
  },
  {
    name: 'notepad', bar: 'w-[9px] bg-[#9a9795]',
    icon: (
      <svg width="28" height="36" viewBox="0 0 28 36">
        <defs><linearGradient id="np" x1="0" y1="0" x2="1" y2="1"><stop stopColor="#78d8ef" /><stop offset="1" stopColor="#3fa9cf" /></linearGradient></defs>
        <rect y="26" width="28" height="10" rx="1.500" fill="#b55a12" /><rect y="24" width="28" height="9" fill="#eee" />
        <rect y="2" width="28" height="28" rx="1.500" fill="url(#np)" />
        <path d="M5 11h18M5 17h18M5 23h18" stroke="#0b6b86" strokeWidth="1.800" />
        <path d="M4.500 0v4M10.500 0v4M17.500 0v4M23.500 0v4" stroke="#0e6a83" strokeWidth="2.500" />
      </svg>
    ),
  },
];

const Taskbar = () => (
  <div className="flex h-[72px] items-center border-t border-[#4c4545] bg-[linear-gradient(to_right,#2e2014_0px,#331c17_100px,#3c191d_190px,#38191c_250px,#29201f_400px,#26221e_640px,#2b2020_760px,#27221e_900px,#2a2020_1060px,#25241d_1250px,#29211c_1440px,#23252a_1540px,#2c2424_1640px,#3b1b20_1740px,#2e1f16_1840px,#2c2113_1920px)] text-white">
    <div className="relative ml-[30px] h-9 w-9">
      <svg width="36" height="36" viewBox="0 0 36 36">
        <defs><linearGradient id="cl" x1="0" y1="0" x2="0" y2="1"><stop stopColor="#8db2ee" /><stop offset="1" stopColor="#d5e4fb" /></linearGradient></defs>
        <path d="M7 15q1-9 10-10 10 0 11 9 8 1 8 7t-7 7H6q-6-1-6-7t7-6z" fill="url(#cl)" />
        <path d="M20 21q9 5 9 10t-4.500 5-4.500-5z" fill="#1677ee" />
      </svg>
      <div className="absolute -top-[9px] left-[17px] flex h-6 w-6 items-center justify-center rounded-full bg-[#ff99a4] text-[15.500px] text-black">5</div>
    </div>
    <svg className="ml-[180px]" width="35" height="35" viewBox="0 0 35 35">
      <defs><linearGradient id="wn" x1="0" y1="0" x2="35" y2="35" gradientUnits="userSpaceOnUse"><stop stopColor="#86e0ff" /><stop offset=".5" stopColor="#3fc0fb" /><stop offset="1" stopColor="#0f98f5" /></linearGradient></defs>
      <path d="M0 1q0-1 1-1h16v17H0zM18 0h16q1 0 1 1v16H18zM0 18h17v17H1q-1 0-1-1zM18 18h17v16q0 1-1 1H18z" fill="url(#wn)" />
    </svg>
    <div className="ml-[20px] flex h-12 w-[330px] items-center rounded-full border border-[#5a5150] bg-[#453e3c]">
      <svg className="ml-[17px]" width="23" height="23" viewBox="0 0 23 23" fill="none" stroke="#e8e4e4" strokeWidth="2.300" strokeLinecap="round"><circle cx="9.800" cy="9.800" r="8.300" /><path d="m16 16 5.500 5.500" /></svg>
      <span className="ml-[15px] text-[19.900px] text-[#cfcac8]">Search</span>
    </div>
    <div className="ml-[6px] flex gap-[6px]">
      {apps.map((a) => (
        <div key={a.name} className={`relative flex h-[60px] w-[60px] items-center justify-center rounded-[7px] ${a.tile ?? ''}`}>
          {a.icon}
          {a.bar && <div className={`absolute bottom-[1px] left-1/2 h-[5px] -translate-x-1/2 rounded-full ${a.bar}`} />}
        </div>
      ))}
    </div>
    <div className="mr-[29px] ml-auto flex items-center">
      <svg width="17" height="10" viewBox="0 0 17 10" fill="none" stroke="#fff" strokeWidth="1.800"><path d="m1 9 7.500-7.500L16 9" /></svg>
      <div className="relative ml-[27px] h-6 w-6">
        <svg width="24" height="24" viewBox="0 0 24 24" fill="#fff"><path d="m6 2 5.500 3.200L6 8.500.5 5.200zM18 2l5.500 3.200L18 8.500l-5.500-3.300zM18 9l5.500 3.200L18 15.500l-5.500-3.300zM14.500 16l2 1.200-2 1.500z" /></svg>
        <div className="absolute top-[10px] left-0 flex h-[13px] w-[13px] items-center justify-center rounded-[3px] bg-[#d80027] font-['Liberation_Sans'] text-[11px] font-bold">8</div>
      </div>
      <svg className="ml-[24px]" width="24" height="18" viewBox="0 0 24 18" fill="none" stroke="#fff" strokeWidth="1.600">
        <path d="M.8 6.500q11.200-10.500 22.400 0M4.300 10.200q7.700-7.400 15.400 0M7.800 13.500q4.200-4 8.400 0" /><circle cx="12" cy="15.500" r="2" fill="#fff" stroke="none" />
      </svg>
      <svg className="ml-[12px]" width="25" height="20" viewBox="0 0 25 20" fill="none" stroke="#fff" strokeWidth="1.600" strokeLinejoin="round">
        <path d="M1 6.500h4.500L11.500 1.500v17L5.500 13.500H1zM14.500 6.500q2.200 3.500 0 7M17.500 4q4 6 0 12M20.500 1.200q6 8.800 0 17.600" />
      </svg>
      <svg className="-mt-1 ml-[11px]" width="25" height="20" viewBox="0 0 25 20" fill="none" stroke="#fff" strokeWidth="1.600">
        <rect x="2" y="4.800" width="18.500" height="14" rx="3" /><rect x="4.500" y="7.300" width="13.500" height="9" rx="1" fill="#fff" stroke="none" /><path d="M22.500 9.500v4.500" strokeWidth="3" />
        <path d="M5.500 0 0 7h3.500L2 11.500 8 5H4.800z" fill="#fff" stroke="#2c2020" strokeWidth=".8" />
      </svg>
      <div className="ml-[24px] text-right text-[17.200px] leading-[24px]">
        <div className="tracking-[0.100px]">3:35 PM</div>
        <div className="tracking-[0.150px]">9/24/2025</div>
      </div>
    </div>
  </div>
);

export default function App() {
  return (
    <div className="h-[1080px] w-[1920px] overflow-hidden bg-[#3b3b3b] font-['Open_Sans',sans-serif]">
      <TabStrip />
      <Toolbar />
      <Bookmarks />
      <div className="mx-[6px] mb-[6px] flex h-[846px] overflow-hidden rounded-[10px] bg-[#050a0e]">
        <Sidebar />
        <Main />
        <PageScrollbar />
      </div>
      <Taskbar />
    </div>
  );
}
